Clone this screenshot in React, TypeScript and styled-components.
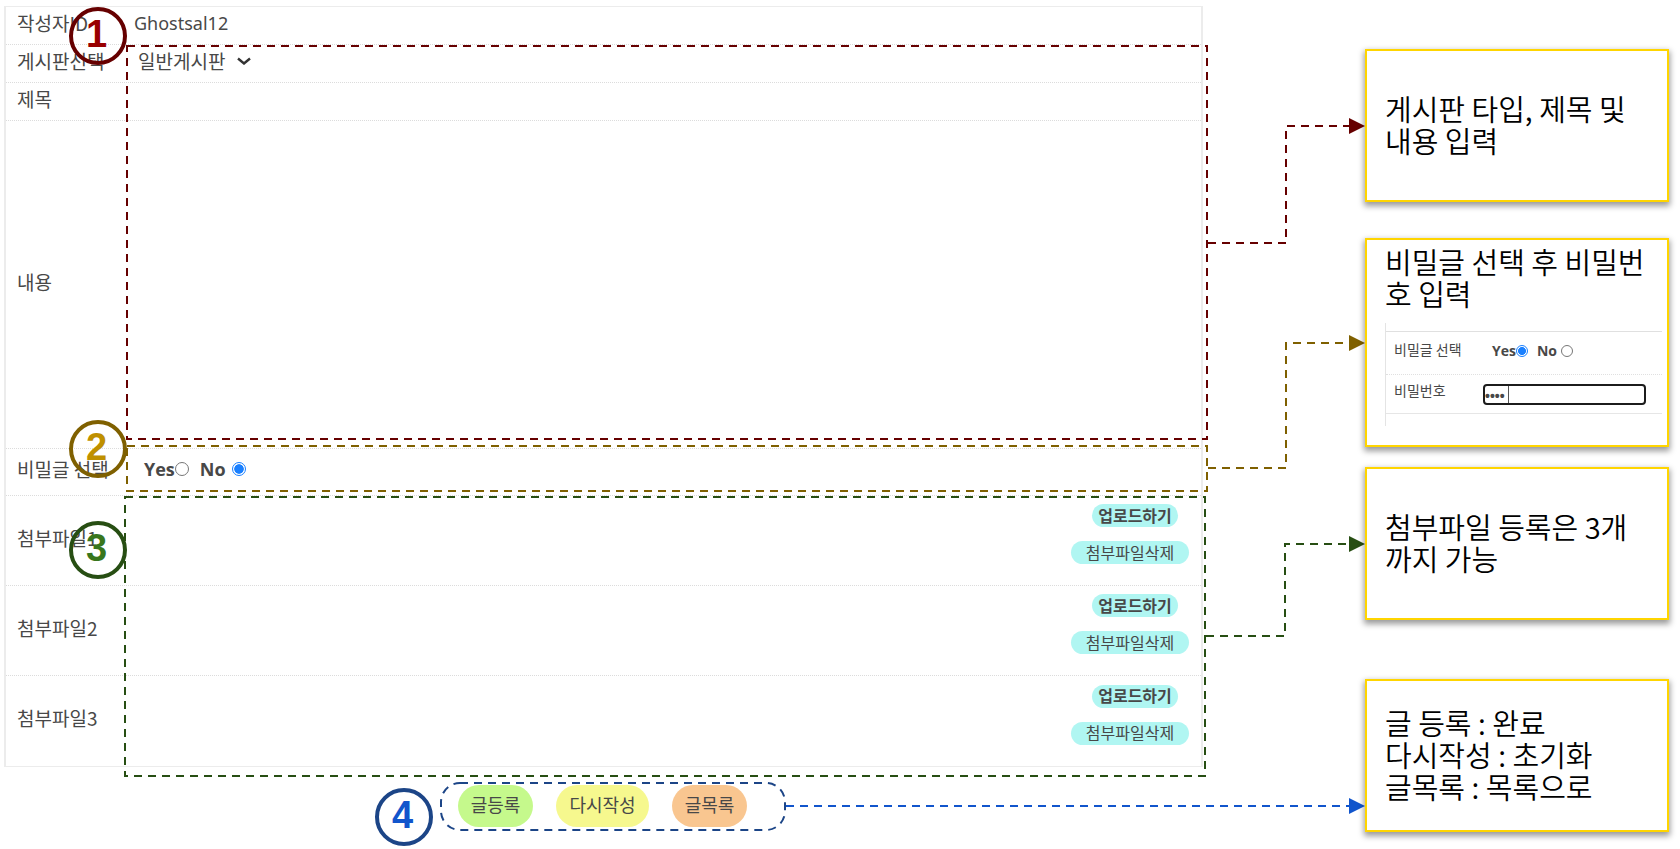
import React from "react";
import styled, { createGlobalStyle } from "styled-components";

const GlobalStyle = createGlobalStyle`
  *, *::before, *::after { box-sizing: border-box; }
  body {
    margin: 0;
    background: #fff;
    color: #484848;
    font-family: "Noto Sans CJK KR", "Noto Sans", sans-serif;
    font-size: 19px;
  }
  button, input, select, textarea { font: inherit; color: inherit; }
`;

const Page = styled.main`
  display: grid;
  grid-template-columns: minmax(0, 1fr) 304px;
  padding: 6px 11px 0 4px;
`;

const Board = styled.form`
  display: flex;
  flex-direction: column;
`;

const BoardTop = styled.div`
  display: flex;
`;

const FormWrap = styled.div`
  position: relative;
  flex: 1;
  min-width: 0;
`;

const FormTable = styled.div`
  border: solid #ececec;
  border-width: 1px 2px;
`;

const Row = styled.div<{ $height: number; $dotted?: boolean }>`
  display: grid;
  grid-template-columns: 119px minmax(0, 1fr);
  align-items: center;
  min-height: ${(p) => p.$height}px;
  & + & {
    border-top: 1px ${(p) => (p.$dotted ? "dotted #dcdcdc" : "solid #e6e6e6")};
  }
`;

const Label = styled.label`
  padding: 0 0 6px 11px;
  line-height: 24px;
  white-space: nowrap;
`;

const Value = styled.div`
  padding: 0 0 6px 9px;
  line-height: 24px;
`;

const Author = styled.span`
  font-family: "Noto Sans", sans-serif;
  font-size: 18px;
`;

const SelectBox = styled.div`
  display: inline-flex;
  align-items: center;
  gap: 11px;
  padding-left: 4px;
`;

const Select = styled.select`
  appearance: none;
  border: 0;
  padding: 0;
  background: transparent;
  line-height: 24px;
`;

const TextField = styled.input`
  display: block;
  width: 100%;
  height: 24px;
  border: 0;
  padding: 0;
  background: transparent;
  outline: none;
`;

const TextArea = styled.textarea`
  display: block;
  width: 100%;
  height: 300px;
  border: 0;
  padding: 0;
  background: transparent;
  resize: none;
  outline: none;
`;

const Choices = styled.div<{ $small?: boolean }>`
  display: flex;
  align-items: center;
  gap: ${(p) => (p.$small ? 9 : 11)}px;
  padding: ${(p) => (p.$small ? "0 0 4px 9px" : "0 0 0 10px")};
  font-family: "Open Sans", "Noto Sans", sans-serif;
  font-weight: 700;
  font-size: ${(p) => (p.$small ? 14 : 18)}px;
  line-height: ${(p) => (p.$small ? 20 : 24)}px;
`;

const Choice = styled.label<{ $gap?: number }>`
  display: flex;
  align-items: center;
  gap: ${(p) => p.$gap ?? 0}px;
`;

const Radio = styled.input<{ $size: number }>`
  appearance: none;
  width: ${(p) => p.$size}px;
  height: ${(p) => p.$size}px;
  margin: 0;
  border: 1px solid #777;
  border-radius: 50%;
  background: #fff;
  &:checked {
    border-color: #1a80ff;
    background: radial-gradient(circle, #1a80ff 0 52%, #fff 60%);
  }
`;

const FileActions = styled.div`
  display: flex;
  flex-direction: column;
  align-items: flex-end;
  gap: 14px;
  padding: 8px 12px 21px 0;
`;

const FileButton = styled.button<{ $strong?: boolean }>`
  width: ${(p) => (p.$strong ? 86 : 118)}px;
  height: 23px;
  margin-right: ${(p) => (p.$strong ? 11 : 0)}px;
  border: 0;
  border-radius: 12px;
  padding: 0 0 2px;
  background: #b0f6f2;
  font-size: 16px;
  font-weight: ${(p) => (p.$strong ? 700 : 400)};
  line-height: 20px;
  white-space: nowrap;
`;

const Highlight = styled.svg<{ $top: number; $height: number; $left: number; $right: number }>`
  position: absolute;
  top: ${(p) => p.$top}px;
  left: ${(p) => p.$left}px;
  width: calc(100% - ${(p) => p.$left + p.$right}px);
  height: ${(p) => p.$height}px;
  overflow: visible;
  pointer-events: none;
`;

const Badge = styled.span<{ $ring: string; $ink: string }>`
  display: flex;
  flex: none;
  justify-content: center;
  width: 58px;
  height: 58px;
  padding-right: 3px;
  border: 4px solid ${(p) => p.$ring};
  border-radius: 50%;
  color: ${(p) => p.$ink};
  font: 700 38px/46px "Liberation Sans", Arial, sans-serif;
`;

const FloatingBadge = styled(Badge)<{ $top: number }>`
  position: absolute;
  left: 65px;
  top: ${(p) => p.$top}px;
  pointer-events: none;
`;

const Connectors = styled.svg`
  flex: none;
  width: 162px;
  height: 761px;
  overflow: visible;
`;

const Footer = styled.div`
  display: flex;
  align-items: flex-start;
  padding: 15px 0 0 371px;
`;

const FooterBadge = styled(Badge)`
  margin: 6px 7px 0 0;
`;

const ActionGroup = styled.div`
  position: relative;
  display: flex;
  flex: none;
  align-items: center;
  gap: 23px;
  width: 346px;
  height: 49px;
  padding: 0 18px 2px;
`;

const ActionOutline = styled.svg`
  position: absolute;
  inset: 0;
  width: 100%;
  height: 100%;
  pointer-events: none;
`;

const ActionButton = styled.button<{ $fill: string; $wide?: boolean }>`
  width: ${(p) => (p.$wide ? 93 : 75)}px;
  height: 42px;
  border: 0;
  border-radius: 21px;
  padding: 0 0 4px;
  background: ${(p) => p.$fill};
  font-size: 18px;
  line-height: 24px;
  white-space: nowrap;
`;

const FooterArrow = styled.div`
  display: flex;
  flex: 1;
  min-width: 0;
  padding-top: 16px;
`;

const DashLine = styled.svg`
  flex: 1;
  min-width: 0;
  height: 16px;
`;

const Notes = styled.aside`
  display: flex;
  flex-direction: column;
  padding-top: 43px;
`;

const Note = styled.section<{ $gap?: number; $tall?: boolean }>`
  display: flex;
  flex-direction: column;
  justify-content: ${(p) => (p.$tall ? "flex-start" : "center")};
  min-height: ${(p) => (p.$tall ? 209 : 153)}px;
  margin-top: ${(p) => p.$gap ?? 0}px;
  padding: ${(p) => (p.$tall ? "5px 5px 0 18px" : "0 5px 4px 18px")};
  border: 2px solid #ffd500;
  background: #fff;
  box-shadow: 0 3px 6px 1px rgba(0, 0, 0, 0.4);
`;

const NoteText = styled.p`
  margin: 0;
  color: #000;
  font-size: 29px;
  font-weight: 350;
  line-height: 32px;
  white-space: pre-line;
`;

const MiniForm = styled.div`
  margin-top: 14px;
  padding: 8px 0 12px;
  border-left: 1px solid #e4e4e4;
  font-size: 14px;
`;

const MiniRow = styled.div<{ $height: number; $last?: boolean }>`
  display: grid;
  grid-template-columns: 97px minmax(0, 1fr);
  align-items: center;
  height: ${(p) => p.$height}px;
  border-top: 1px ${(p) => (p.$last ? "dotted" : "solid")} #e0e0e0;
  border-bottom: ${(p) => (p.$last ? "1px solid #e6e6e6" : "0")};
`;

const MiniLabel = styled.label`
  padding: 0 0 8px 8px;
  line-height: 20px;
`;

const PasswordBox = styled.div`
  position: relative;
  width: 163px;
`;

const Password = styled.input`
  display: block;
  width: 100%;
  height: 21px;
  border: 2px solid #1c1c1c;
  border-radius: 4px;
  padding: 3px 0 0;
  background: #fff;
  font: 700 14px/16px "Liberation Sans", Arial, sans-serif;
  outline: none;
`;

const Caret = styled.span`
  position: absolute;
  top: 2px;
  bottom: 2px;
  left: 25px;
  width: 1px;
  background: #555;
`;

type HighlightBoxProps = { top: number; height: number; left: number; right: number; color: string };

function HighlightBox({ top, height, left, right, color }: HighlightBoxProps) {
  return (
    <Highlight $top={top} $height={height} $left={left} $right={right} aria-hidden="true">
      <svg x="1" y="1" overflow="visible" width="100%" height="100%">
        <rect
          style={{ width: "calc(100% - 2px)", height: "calc(100% - 2px)" }}
          fill="none"
          stroke={color}
          strokeWidth="2"
          strokeDasharray="8 6"
        />
      </svg>
    </Highlight>
  );
}

const links = [
  { color: "#660000", line: "M5 237H83V120H146", tip: "M146 112L162 120L146 128Z" },
  { color: "#7f6000", line: "M5 462H83V337H146", tip: "M146 329L162 337L146 345Z" },
  { color: "#274e13", line: "M3 630H82V538H146", tip: "M146 530L162 538L146 546Z" },
];

export default function App() {
  return (
    <>
      <GlobalStyle />
      <Page>
        <Board onSubmit={(e) => e.preventDefault()}>
          <BoardTop>
            <FormWrap>
              <FormTable>
                <Row $height={37}>
                  <Label as="span">작성자ID</Label>
                  <Value><Author>Ghostsal12</Author></Value>
                </Row>
                <Row $height={38}>
                  <Label htmlFor="board">게시판선택</Label>
                  <Value>
                    <SelectBox>
                      <Select id="board" defaultValue="일반게시판">
                        <option>일반게시판</option>
                      </Select>
                      <svg width="14" height="9" viewBox="0 0 14 9" aria-hidden="true">
                        <path d="M1 2.500L7 7.500L13 2.500" fill="none" stroke="#333" strokeWidth="2.400" />
                      </svg>
                    </SelectBox>
                  </Value>
                </Row>
                <Row $height={38}>
                  <Label htmlFor="title">제목</Label>
                  <Value><TextField id="title" type="text" /></Value>
                </Row>
                <Row $height={328}>
                  <Label htmlFor="content">내용</Label>
                  <Value><TextArea id="content" /></Value>
                </Row>
                <Row $height={47}>
                  <Label as="span">비밀글 선택</Label>
                  <Value>
                    <Choices>
                      <Choice>Yes<Radio $size={14} type="radio" name="secret" /></Choice>
                      <Choice $gap={6}>No<Radio $size={14} type="radio" name="secret" defaultChecked /></Choice>
                    </Choices>
                  </Value>
                </Row>
                {[1, 2, 3].map((n) => (
                  <Row key={n} $height={n === 3 ? 91 : 90} $dotted={n > 1}>
                    <Label as="span">첨부파일{n}</Label>
                    <FileActions>
                      <FileButton type="button" $strong>업로드하기</FileButton>
                      <FileButton type="button">첨부파일삭제</FileButton>
                    </FileActions>
                  </Row>
                ))}
              </FormTable>
              <HighlightBox top={39} height={395} left={122} right={-5} color="#660000" />
              <HighlightBox top={439} height={47} left={122} right={-5} color="#7f6000" />
              <HighlightBox top={490} height={281} left={120} right={-3} color="#274e13" />
              <FloatingBadge $top={1} $ring="#660000" $ink="#990000">1</FloatingBadge>
              <FloatingBadge $top={414} $ring="#7f6000" $ink="#bf9000">2</FloatingBadge>
              <FloatingBadge $top={515} $ring="#274e13" $ink="#38761d">3</FloatingBadge>
            </FormWrap>
            <Connectors viewBox="0 0 162 761" aria-hidden="true">
              {links.map((l) => (
                <g key={l.color}>
                  <path d={l.line} fill="none" stroke={l.color} strokeWidth="2" strokeDasharray="8 6" />
                  <path d={l.tip} fill={l.color} />
                </g>
              ))}
            </Connectors>
          </BoardTop>
          <Footer>
            <FooterBadge $ring="#1c4587" $ink="#1155cc">4</FooterBadge>
            <ActionGroup>
              <ActionButton type="submit" $fill="#c5f98c">글등록</ActionButton>
              <ActionButton type="reset" $fill="#f6f88e" $wide>다시작성</ActionButton>
              <ActionButton type="button" $fill="#f9c690">글목록</ActionButton>
              <ActionOutline viewBox="0 0 346 49" aria-hidden="true">
                <rect x="1" y="1" width="344" height="47" rx="19" fill="none" stroke="#1c4587" strokeWidth="2" strokeDasharray="8 6" />
              </ActionOutline>
            </ActionGroup>
            <FooterArrow>
              <DashLine aria-hidden="true">
                <line x1="0" y1="8" x2="100%" y2="8" stroke="#1155cc" strokeWidth="2" strokeDasharray="8 6" />
              </DashLine>
              <svg width="16" height="16" viewBox="0 0 16 16" aria-hidden="true">
                <path d="M0 0L16 8L0 16Z" fill="#1155cc" />
              </svg>
            </FooterArrow>
          </Footer>
        </Board>
        <Notes>
          <Note>
            <NoteText>{"게시판 타입, 제목 및\n내용 입력"}</NoteText>
          </Note>
          <Note $gap={36} $tall>
            <NoteText>{"비밀글 선택 후 비밀번\n호 입력"}</NoteText>
            <MiniForm>
              <MiniRow $height={43}>
                <MiniLabel as="span">비밀글 선택</MiniLabel>
                <Choices $small>
                  <Choice>Yes<Radio $size={12} type="radio" name="secret-note" defaultChecked /></Choice>
                  <Choice $gap={4}>No<Radio $size={12} type="radio" name="secret-note" /></Choice>
                </Choices>
              </MiniRow>
              <MiniRow $height={40} $last>
                <MiniLabel htmlFor="note-password">비밀번호</MiniLabel>
                <PasswordBox>
                  <Password id="note-password" type="password" defaultValue="1234" />
                  <Caret />
                </PasswordBox>
              </MiniRow>
            </MiniForm>
          </Note>
          <Note $gap={20}>
            <NoteText>{"첨부파일 등록은 3개\n까지 가능"}</NoteText>
          </Note>
          <Note $gap={59}>
            <NoteText>{"글 등록 : 완료\n다시작성 : 초기화\n글목록 : 목록으로"}</NoteText>
          </Note>
        </Notes>
      </Page>
    </>
  );
}
